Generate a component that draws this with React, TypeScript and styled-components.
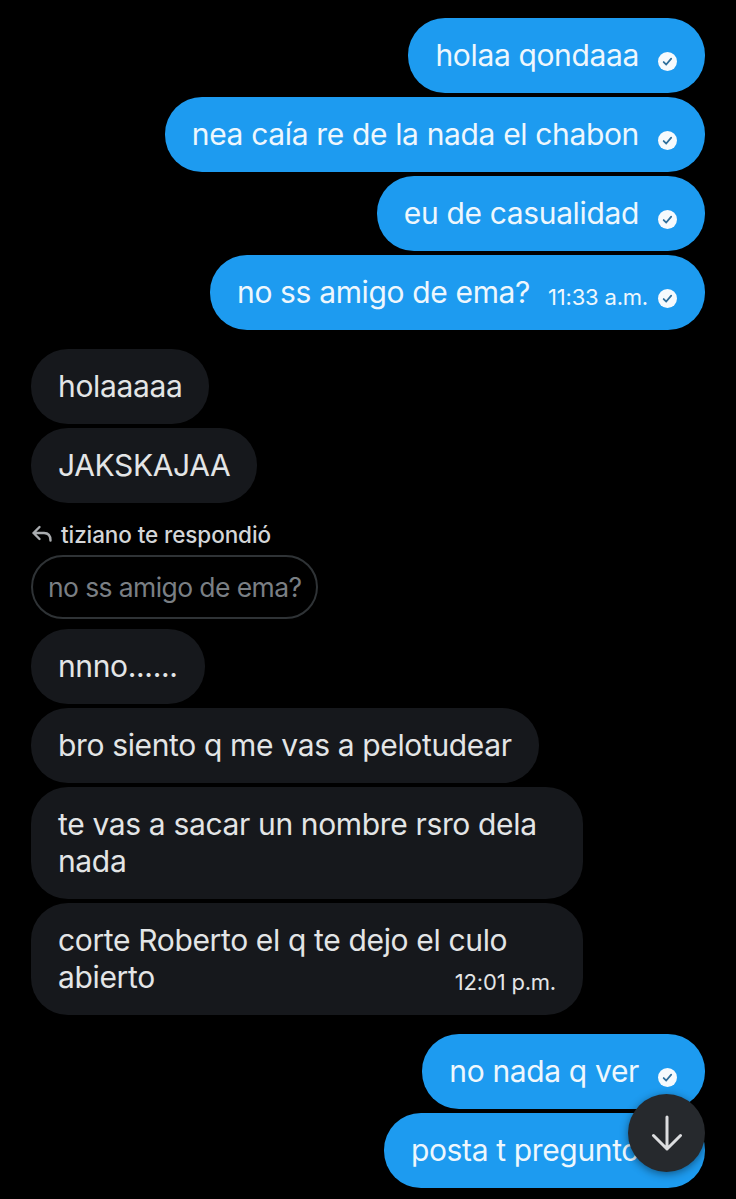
import React from "react"
import styled, { createGlobalStyle } from "styled-components"

const GlobalStyle = createGlobalStyle`
  html, body {
    margin: 0;
    padding: 0;
    background: #000000;
  }
  body {
    font-family: Inter, "Noto Sans", sans-serif;
    overflow: hidden;
  }
`

const CheckIcon = ({ $timed }: { $timed?: boolean }) => (
  <CheckSvg viewBox="0 0 20 20" $timed={$timed}>
    <circle cx="10" cy="10" r="10" fill="#f6fafd" />
    <path d="M6 10.6l2.7 2.6 5.2-6.2" fill="none" stroke="#2f6f9c" strokeWidth="1.9" strokeLinecap="round" strokeLinejoin="round" />
  </CheckSvg>
)

const Sent = ({ text, time }: { text: string; time?: string }) => (
  <SentBubble>
    <span>{text}</span>
    {time && <SentTime>{time}</SentTime>}
    <CheckIcon $timed={!!time} />
  </SentBubble>
)

export default function App() {
  return (
    <Page>
      <GlobalStyle />
      <Group>
        <Sent text="holaa qondaaa" />
        <Sent text="nea caía re de la nada el chabon" />
        <Sent text="eu de casualidad" />
        <Sent text="no ss amigo de ema?" time="11:33 a.m." />
      </Group>

      <Group>
        <Received>holaaaaa</Received>
        <Received>JAKSKAJAA</Received>
      </Group>

      <ReplyBlock>
        <ReplyLabel>
          <svg width="22" height="20" viewBox="0 0 22 20" fill="none">
            <path d="M8.5 3L2.5 9l6 6M2.5 9H13c4 0 6.5 2.5 6.5 7.5" stroke="#a9acaf" strokeWidth="2.4" strokeLinecap="round" strokeLinejoin="round" />
          </svg>
          tiziano te respondió
        </ReplyLabel>
        <Quoted>no ss amigo de ema?</Quoted>
      </ReplyBlock>

      <Group>
        <Received>nnno......</Received>
        <Received>bro siento q me vas a pelotudear</Received>
        <Received>te vas a sacar un nombre rsro dela nada</Received>
        <Received $wide>
          <div>corte Roberto el q te dejo el culo</div>
          <LastLine>
            <span>abierto</span>
            <ReceivedTime>12:01 p.m.</ReceivedTime>
          </LastLine>
        </Received>
      </Group>

      <Group>
        <Sent text="no nada q ver" />
        <Sent text="posta t pregunto" />
      </Group>

      <ScrollButton>
        <svg width="34" height="36" viewBox="0 0 34 36" fill="none">
          <path d="M17 2v32M3.5 20.5L17 34l13.5-13.5" stroke="#dcdddf" strokeWidth="3" strokeLinecap="round" strokeLinejoin="round" />
        </svg>
      </ScrollButton>
    </Page>
  )
}

const Page = styled.div`
  position: relative;
  width: 736px;
  height: 1199px;
  box-sizing: border-box;
  padding: 18px 31px 0;
  overflow: hidden;
  background: #000000;
  display: flex;
  flex-direction: column;
  gap: 19px;
`

const Group = styled.div`
  display: flex;
  flex-direction: column;
  gap: 4px;
`

const SentBubble = styled.div`
  align-self: flex-end;
  box-sizing: border-box;
  height: 75px;
  display: flex;
  align-items: center;
  padding: 0 28px 0 27px;
  border-radius: 37px;
  background: #1d9bf0;
  color: #eef7fd;
  font-size: 30px;
  letter-spacing: -0.35px;
  line-height: 37px;
  white-space: nowrap;
`

const SentTime = styled.span`
  margin-left: 18px;
  margin-top: 10px;
  font-size: 22px;
  letter-spacing: -0.2px;
`

const CheckSvg = styled.svg<{ $timed?: boolean }>`
  width: 19px;
  height: 19px;
  margin-left: ${({ $timed }) => ($timed ? "10px" : "19px")};
  margin-top: 12px;
`

const Received = styled.div<{ $wide?: boolean }>`
  align-self: flex-start;
  box-sizing: border-box;
  width: ${({ $wide }) => ($wide ? "552px" : "auto")};
  max-width: 552px;
  padding: 19px 27px;
  border-radius: 37px;
  background: #16181c;
  color: #e3e5e6;
  font-size: 30px;
  letter-spacing: -0.35px;
  line-height: 37px;
`

const LastLine = styled.div`
  display: flex;
  justify-content: space-between;
  align-items: flex-end;
`

const ReceivedTime = styled.span`
  font-size: 22px;
  line-height: 28px;
  letter-spacing: -0.2px;
`

const ReplyBlock = styled.div`
  display: flex;
  flex-direction: column;
  margin-bottom: -9px;
`

const ReplyLabel = styled.div`
  display: flex;
  align-items: center;
  gap: 8px;
  height: 24px;
  margin-bottom: 9px;
  color: #d4d6d8;
  font-size: 22.5px;
  letter-spacing: -0.1px;
  font-weight: 500;
`

const Quoted = styled.div`
  align-self: flex-start;
  box-sizing: border-box;
  height: 64px;
  padding: 0 15px;
  display: flex;
  align-items: center;
  border: 2px solid #2f3336;
  border-radius: 32px;
  color: #7a7f84;
  font-size: 26.5px;
  letter-spacing: -0.6px;
`

const ScrollButton = styled.div`
  position: absolute;
  left: 628px;
  top: 1094px;
  width: 77px;
  height: 78px;
  display: flex;
  align-items: center;
  justify-content: center;
  border-radius: 50%;
  background: #26292d;
  box-shadow: 0 2px 8px rgba(0, 0, 0, 0.45);
`
